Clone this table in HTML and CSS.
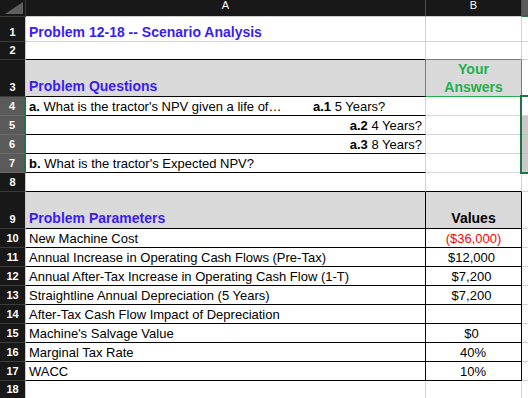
FILE: index.html
```html
<!DOCTYPE html>
<html>
<head>
<meta charset="utf-8">
<link rel="stylesheet" href="styles.css">
</head>
<body>
<div class="sheet">
  <div class="corner"><svg width="25" height="16" viewBox="0 0 25 16"><polygon points="23,2 23,14 5,14" fill="#5e5e5e"/></svg></div>
  <div class="ch"><span class="chl">A</span></div>
  <div class="ch"><span class="chl">B</span></div>
  <div class="ch chsel"></div>

  <div class="rh">1</div>
  <div class="c title">Problem 12-18 -- Scenario Analysis</div>
  <div class="c"></div>
  <div class="c cc"></div>

  <div class="rh">2</div>
  <div class="c bb"></div>
  <div class="c bgn"></div>
  <div class="c cc"></div>

  <div class="rh">3</div>
  <div class="c fill bb rgn sect">Problem Questions</div>
  <div class="c fill rgn bgn answers">Your<br>Answers</div>
  <div class="c cc"></div>

  <div class="rh sel">4</div>
  <div class="c bb"><span class="q"><b>a.</b> What is the tractor's NPV given a life of…</span><span><b>a.1</b> 5 Years?</span></div>
  <div class="c"></div>
  <div class="c cc"></div>

  <div class="rh sel">5</div>
  <div class="c bb right"><span><b>a.2</b> 4 Years?</span></div>
  <div class="c"></div>
  <div class="c cc selfill"></div>

  <div class="rh sel">6</div>
  <div class="c bb right"><span><b>a.3</b> 8 Years?</span></div>
  <div class="c"></div>
  <div class="c cc selfill"></div>

  <div class="rh sel">7</div>
  <div class="c bb"><span><b>b.</b> What is the tractor's Expected NPV?</span></div>
  <div class="c"></div>
  <div class="c cc selfill"></div>

  <div class="rh">8</div>
  <div class="c bb"></div>
  <div class="c bb"></div>
  <div class="c cc"></div>

  <div class="rh">9</div>
  <div class="c fill bb rb sect">Problem Parameters</div>
  <div class="c fill bb rb num head">Values</div>
  <div class="c cc"></div>

  <div class="rh">10</div>
  <div class="c bb rb">New Machine Cost</div>
  <div class="c bb rb num neg">($36,000)</div>
  <div class="c cc"></div>

  <div class="rh">11</div>
  <div class="c bb rb">Annual Increase in Operating Cash Flows (Pre-Tax)</div>
  <div class="c bb rb num pos">$12,000</div>
  <div class="c cc"></div>

  <div class="rh">12</div>
  <div class="c bb rb">Annual After-Tax Increase in Operating Cash Flow (1-T)</div>
  <div class="c bb rb num pos">$7,200</div>
  <div class="c cc"></div>

  <div class="rh">13</div>
  <div class="c bb rb">Straightline Annual Depreciation (5 Years)</div>
  <div class="c bb rb num pos">$7,200</div>
  <div class="c cc"></div>

  <div class="rh">14</div>
  <div class="c bb rb">After-Tax Cash Flow Impact of Depreciation</div>
  <div class="c bb rb num"></div>
  <div class="c cc"></div>

  <div class="rh">15</div>
  <div class="c bb rb">Machine's Salvage Value</div>
  <div class="c bb rb num pos">$0</div>
  <div class="c cc"></div>

  <div class="rh">16</div>
  <div class="c bb rb">Marginal Tax Rate</div>
  <div class="c bb rb num pct">40%</div>
  <div class="c cc"></div>

  <div class="rh">17</div>
  <div class="c bb rb">WACC</div>
  <div class="c bb rb num pct">10%</div>
  <div class="c cc"></div>

  <div class="rh">18</div>
  <div class="c"></div>
  <div class="c"></div>
  <div class="c cc"></div>

  <div class="selection"></div>
</div>
</body>
</html>
```

FILE: styles.css
```css
html, body {
  margin: 0;
  padding: 0;
  background: #ffffff;
  overflow: hidden;
}

.sheet {
  position: relative;
  display: grid;
  grid-template-columns: 26px 400px 96px 6px;
  grid-template-rows: 17px 25px 18px 37px repeat(5, 19px) 37px repeat(8, 19px) 18px;
  width: 528px;
  font-family: "Liberation Sans", Arial, sans-serif;
  color: #000;
}

.corner {
  background: #181818;
  border-right: 1px solid #3a3a3a;
  border-bottom: 1px solid #3a3a3a;
  box-sizing: border-box;
  overflow: hidden;
}

.corner svg {
  display: block;
}

.ch {
  box-sizing: border-box;
  background: #181818;
  border-right: 1px solid #4f4f4f;
  border-bottom: 1px solid #cfcfcf;
  color: #ffffff;
  text-align: center;
}

.chl {
  display: block;
  font-size: 11px;
  line-height: 10px;
  padding-top: 0;
}

.chsel {
  background: #5c5c5c;
  border-right: none;
  border-bottom: 2px solid #217346;
}

.rh {
  box-sizing: border-box;
  background: #181818;
  color: #ffffff;
  font-size: 11px;
  font-weight: bold;
  line-height: 13px;
  display: flex;
  align-items: flex-end;
  justify-content: center;
  padding-bottom: 2px;
  border-right: 1px solid #c9c9c9;
  border-bottom: 1px solid #3c3c3c;
}

.rh.sel {
  background: #5a5a5a;
  border-right: 2px solid #217346;
  border-bottom-color: #6a6a6a;
}

.c {
  box-sizing: border-box;
  display: flex;
  align-items: flex-end;
  padding: 0 3px 1px;
  font-size: 13px;
  line-height: 15px;
  white-space: nowrap;
  overflow: hidden;
  border-right: 1px solid #d4d4d4;
  border-bottom: 1px solid #d4d4d4;
}

.cc {
  border-right: none;
}

.bb { border-bottom-color: #000000; }
.rb { border-right-color: #000000; }
.rgn { border-right-color: #22b14c; }
.bgn { border-bottom-color: #22b14c; }

.fill { background: #d9d9d9; }
.selfill { background: #c9c9c9; border-bottom-color: #b4c8ba; }

.title {
  color: #3b1cf2;
  font-weight: bold;
  font-size: 14px;
  line-height: 16px;
}

.sect {
  color: #3b1cf2;
  font-weight: bold;
  font-size: 14px;
  line-height: 18px;
}

.answers {
  color: #1fb04e;
  font-weight: bold;
  font-size: 14px;
  line-height: 18px;
  justify-content: center;
  text-align: center;
  padding-bottom: 0;
}

.q {
  display: inline-block;
  width: 284px;
  flex: none;
}

.right {
  justify-content: flex-end;
}

.num {
  justify-content: center;
}

.head {
  font-weight: bold;
  font-size: 14px;
  line-height: 18px;
}

.neg { color: #ff0000; }
.pos { padding-right: 7px; }
.pct { padding-right: 4px; }

.selection {
  position: absolute;
  left: 520px;
  top: 95px;
  width: 12px;
  height: 79px;
  box-sizing: border-box;
  border: 2px solid #217346;
  pointer-events: none;
}
```
